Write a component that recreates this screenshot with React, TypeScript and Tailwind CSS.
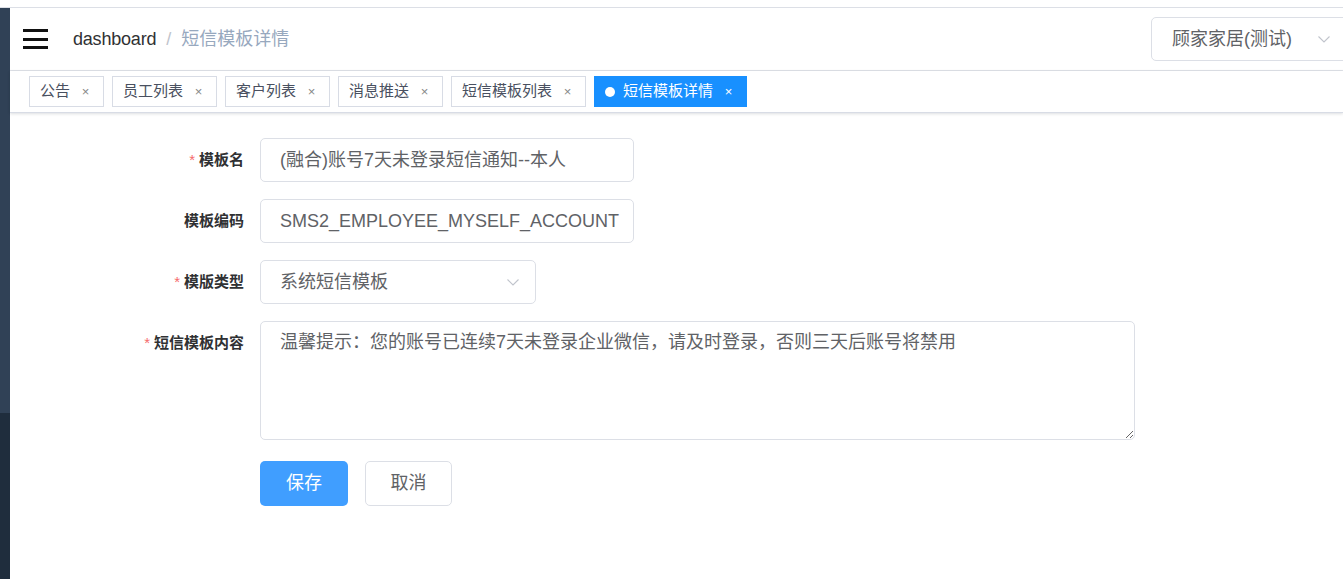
import React from 'react';

const tags = ['公告', '员工列表', '客户列表', '消息推送', '短信模板列表'];

function Chevron({ className }: { className?: string }) {
  return (
    <svg viewBox="0 0 16 16" className={className} fill="none" stroke="currentColor" strokeWidth="1.1">
      <path d="M2.5 5.5 L8 11 L13.5 5.5" />
    </svg>
  );
}

function Label({ text, required }: { text: string; required?: boolean }) {
  return (
    <div className="w-[250px] shrink-0 pr-[16px] text-right text-[15px] font-bold text-[#303133] leading-[44px]">
      {required && <span className="text-[#f56c6c] mr-[4px] font-normal">*</span>}
      {text}
    </div>
  );
}

export default function App() {
  return (
    <div
      className="w-full h-[579px] flex flex-col bg-white overflow-hidden"
      style={{ fontFamily: '"Liberation Sans", "Noto Sans CJK SC", sans-serif' }}
    >
      <div className="h-[8px] shrink-0 border-b border-[#dcdfe6]" />
      <div className="flex flex-1 min-h-0">
        {/* sidebar sliver */}
        <div className="w-[10px] shrink-0 flex flex-col">
          <div className="h-[405px] bg-[#304156]" />
          <div className="flex-1 bg-[#1f2d3d]" />
        </div>

        <div className="flex-1 flex flex-col min-w-0">
          {/* navbar */}
          <div className="h-[63px] shrink-0 flex items-center border-b border-[#e1e4ea] pl-[13px] overflow-hidden">
            <div className="w-[25px] flex flex-col gap-[5.5px]">
              <span className="block h-[3px] bg-[#111]" />
              <span className="block h-[3px] bg-[#111]" />
              <span className="block h-[3px] bg-[#111]" />
            </div>
            <div className="ml-[25px] text-[18px] flex items-center">
              <span className="text-[#303133] tracking-[-0.2px]">dashboard</span>
              <span className="text-[#c0c4cc] mx-[10px]">/</span>
              <span className="text-[#97a8be]">短信模板详情</span>
            </div>
            <div className="ml-auto -mr-[20px] w-[212px] h-[44px] shrink-0 border border-[#dcdfe6] rounded-[5px] flex items-center pl-[20px] pr-[30px]">
              <span className="text-[18px] text-[#606266]">顾家家居(测试)</span>
              <Chevron className="ml-auto w-[16px] h-[16px] text-[#c0c4cc]" />
            </div>
          </div>

          {/* tags view */}
          <div className="h-[42px] shrink-0 flex items-center gap-[8px] pl-[19px] border-b border-[#d8dce5] shadow-[0_1px_3px_0_rgba(0,21,41,0.12),0_0_3px_0_rgba(0,0,0,0.04)]">
            {tags.map((t) => (
              <div
                key={t}
                className="h-[31px] flex items-center pl-[10px] pr-[8px] border border-[#d8dce5] text-[15px] text-[#495060] bg-white"
              >
                <span>{t}</span>
                <span className="ml-[6px] w-[19px] text-center text-[13px] text-[#888]">×</span>
              </div>
            ))}
            <div className="h-[31px] flex items-center pl-[10px] pr-[8px] bg-[#1890ff] border border-[#1890ff] text-[15px] text-white">
              <span className="w-[10px] h-[10px] rounded-full bg-white mr-[8px]" />
              <span>短信模板详情</span>
              <span className="ml-[6px] w-[19px] text-center text-[13px]">×</span>
            </div>
          </div>

          {/* form */}
          <div className="flex flex-col pt-[25px]">
            <div className="flex items-start mb-[17px]">
              <Label text="模板名" required />
              <div className="w-[374px] h-[44px] border border-[#dcdfe6] rounded-[5px] flex items-center px-[19px] text-[18px] text-[#606266]">
                (融合)账号7天未登录短信通知--本人
              </div>
            </div>
            <div className="flex items-start mb-[17px]">
              <Label text="模板编码" />
              <div className="w-[374px] h-[44px] border border-[#dcdfe6] rounded-[5px] flex items-center px-[19px] text-[18px] text-[#606266] whitespace-nowrap overflow-hidden">
                SMS2_EMPLOYEE_MYSELF_ACCOUNT
              </div>
            </div>
            <div className="flex items-start mb-[17px]">
              <Label text="模版类型" required />
              <div className="w-[276px] h-[44px] border border-[#dcdfe6] rounded-[5px] flex items-center pl-[19px] pr-[14px] text-[18px] text-[#606266]">
                <span>系统短信模板</span>
                <Chevron className="ml-auto w-[16px] h-[16px] text-[#c0c4cc]" />
              </div>
            </div>
            <div className="flex items-start mb-[21px]">
              <Label text="短信模板内容" required />
              <textarea
                readOnly
                defaultValue="温馨提示：您的账号已连续7天未登录企业微信，请及时登录，否则三天后账号将禁用"
                className="w-[875px] h-[119px] border border-[#dcdfe6] rounded-[5px] px-[19px] pt-[7px] text-[18px] leading-[26px] text-[#606266] outline-none"
                style={{ fontFamily: '"Liberation Sans", "Noto Sans CJK SC", sans-serif' }}
              />
            </div>
            <div className="flex items-center pl-[250px] gap-[17px]">
              <button className="w-[88px] h-[45px] rounded-[5px] bg-[#409eff] text-white text-[18px]">保存</button>
              <button className="w-[87px] h-[45px] rounded-[5px] border border-[#dcdfe6] bg-white text-[#606266] text-[18px]">取消</button>
            </div>
          </div>
        </div>
      </div>
    </div>
  );
}
